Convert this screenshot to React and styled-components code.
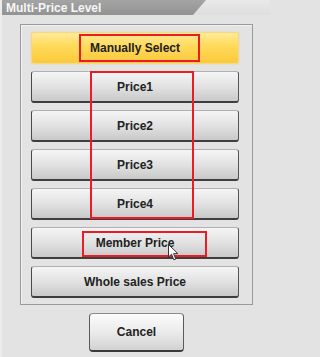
import React from "react";
import styled, { createGlobalStyle, css } from "styled-components";

const GlobalStyle = createGlobalStyle`
    html, body {
        margin: 0;
        padding: 0;
        background: #e3e3e3;
    }
    body {
        font-family: "Liberation Sans", Arial, sans-serif;
    }
`;

const Window = styled.div`
    width: 270px;
    height: 357px;
    background: #e3e3e3;
    display: flex;
    flex-direction: column;
    box-sizing: border-box;
    border-left: 2px solid #ececec;
    overflow: hidden;
`;

const TitleRow = styled.div`
    height: 15px;
    background: linear-gradient(#e9e9e9, #dedede);
    display: flex;
`;

const TitleTab = styled.div`
    width: 206px;
    height: 15px;
    margin-left: -2px;
    background: linear-gradient(#a4a4a4, #939393);
    clip-path: polygon(0 0, 206px 0, 193px 15px, 0 15px);
    color: #f6f6f6;
    font-size: 12px;
    font-weight: bold;
    line-height: 16px;
    padding-left: 6px;
    box-sizing: border-box;
    white-space: nowrap;
`;

const Body = styled.div`
    display: flex;
    flex-direction: column;
    align-items: flex-start;
    padding: 9px 0 0 18px;
`;

const Panel = styled.div`
    width: 233px;
    box-sizing: border-box;
    border: 1px solid #9a9a9a;
    box-shadow: inset 1px 1px 0 #f2f2f2;
    padding: 7px 0 6px 10px;
    display: flex;
    flex-direction: column;
    gap: 7px;
`;

const Group = styled.div`
    position: relative;
    display: flex;
    flex-direction: column;
    gap: 7px;
`;

const grayFace = css`
    background: linear-gradient(#f5f5f5 0%, #e2e2e2 50%, #c9c9c9 100%);
    border: 1px solid #7a7a7a;
    border-top-color: #b0b0b0;
    border-bottom: 2px solid #3e3e3e;
    border-left-color: #4a4a4a;
    border-right-color: #555;
`;

const yellowFace = css`
    background: linear-gradient(#ffeb96 0%, #ffd95a 45%, #fbc93a 100%);
    border: 1px solid #f3d88a;
    box-shadow: 0 0 1px #f0b030;
`;

const PriceButton = styled.div`
    position: relative;
    width: 208px;
    height: 32px;
    box-sizing: border-box;
    border-radius: 3px;
    display: flex;
    align-items: center;
    justify-content: center;
    font-size: 12px;
    font-weight: bold;
    color: #222;
    ${(p) => (p.$active ? yellowFace : grayFace)}
`;

const Mark = styled.div`
    position: absolute;
    border: 2.5px solid #ec1c24;
    box-sizing: border-box;
    pointer-events: none;
    left: ${(p) => p.$left}px;
    top: ${(p) => p.$top}px;
    width: ${(p) => p.$w}px;
    height: ${(p) => p.$h}px;
`;

const Footer = styled.div`
    width: 233px;
    display: flex;
    justify-content: center;
    padding-top: 8px;
`;

const CancelButton = styled.div`
    width: 95px;
    height: 39px;
    box-sizing: border-box;
    border-radius: 4px;
    border: 1px solid #5a5a5a;
    border-top-color: #8a8a8a;
    border-bottom: 2px solid #3a3a3a;
    background: linear-gradient(#fbfbfb 0%, #ebebeb 50%, #d2d2d2 100%);
    display: flex;
    align-items: center;
    justify-content: center;
    font-size: 12px;
    font-weight: bold;
    color: #222;
`;

const Cursor = styled.svg`
    position: absolute;
    left: 136px;
    top: 16px;
    width: 11px;
    height: 17px;
`;

function App() {
    return (
        <>
            <GlobalStyle />
            <Window>
                <TitleRow>
                    <TitleTab>Multi-Price Level</TitleTab>
                </TitleRow>
                <Body>
                    <Panel>
                        <PriceButton $active>
                            Manually Select
                            <Mark $left={47} $top={1} $w={121} $h={28} />
                        </PriceButton>
                        <Group>
                            <PriceButton>Price1</PriceButton>
                            <PriceButton>Price2</PriceButton>
                            <PriceButton>Price3</PriceButton>
                            <PriceButton>Price4</PriceButton>
                            <Mark $left={59} $top={0} $w={104} $h={148} />
                        </Group>
                        <PriceButton>
                            Member Price
                            <Mark $left={50} $top={3} $w={125} $h={26} />
                            <Cursor viewBox="0 0 11 17">
                                <path d="M0.5 0.5 L0.5 13 L3.5 10.2 L5.8 15.8 L7.8 15 L5.6 9.6 L9.8 9.6 Z" fill="#fff" stroke="#333" strokeWidth="1" strokeLinejoin="round" />
                            </Cursor>
                        </PriceButton>
                        <PriceButton>Whole sales Price</PriceButton>
                    </Panel>
                    <Footer>
                        <CancelButton>Cancel</CancelButton>
                    </Footer>
                </Body>
            </Window>
        </>
    );
}

export default App;
